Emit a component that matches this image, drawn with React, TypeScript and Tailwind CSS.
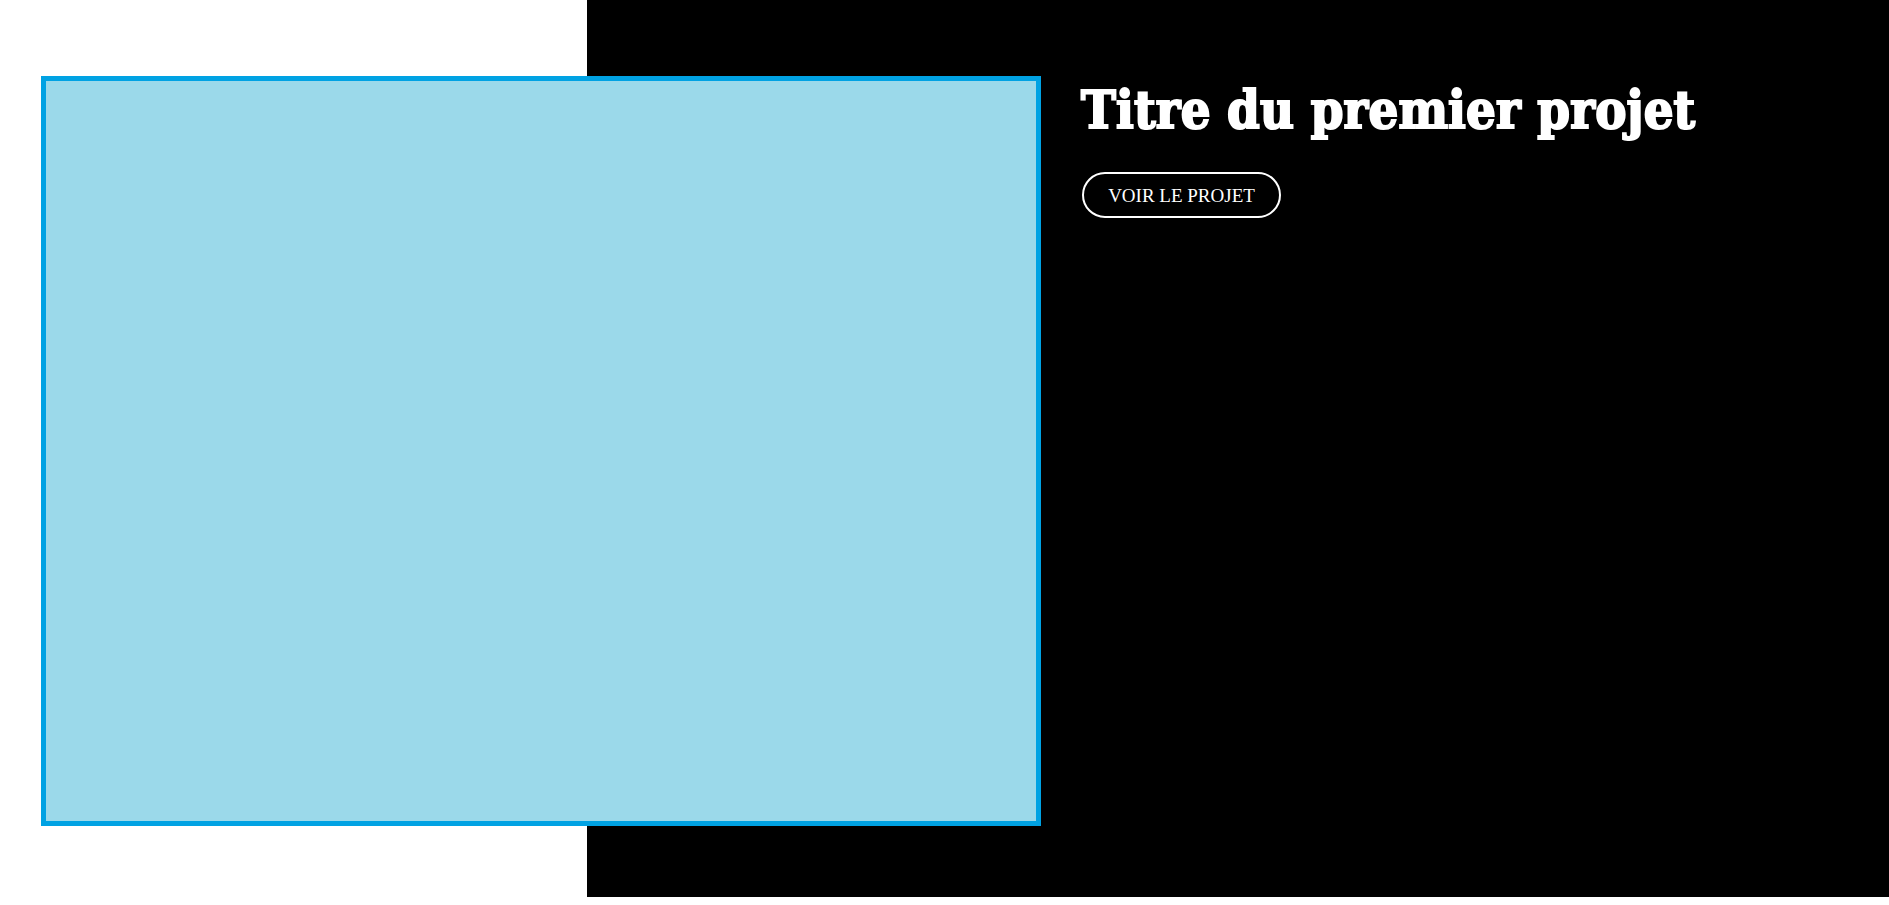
import React from "react";

const App: React.FC = () => {
  return (
    <div className="min-h-screen w-full bg-white">
      {/* Section: white strip on the left, black panel on the right */}
      <section className="h-[897px] bg-[linear-gradient(to_right,#ffffff_587px,#000000_587px)] pt-[76px] pl-[41px]">
        <div className="flex items-start">
          {/* Project image placeholder */}
          <div className="h-[750px] w-[1000px] shrink-0 border-[5px] border-[#00a2e3] bg-[#9bd9ea]" />

          {/* Project text */}
          <div className="ml-[40px] flex flex-col items-start">
            <h2 className="mt-[6px] font-['DejaVu_Serif',serif] text-[52px] font-black leading-[56px] tracking-[0.2px] text-white [font-stretch:condensed] [-webkit-text-stroke:2px_white]">
              Titre du premier projet
            </h2>
            <a
              href="#"
              className="ml-[1px] mt-[34px] flex h-[46px] w-[199px] items-center justify-center rounded-full border-2 border-white pt-[3px] font-['Liberation_Serif',serif] text-[19px] uppercase text-white first-letter:text-[22px]"
            >
              Voir le projet
            </a>
          </div>
        </div>
      </section>
    </div>
  );
};

export default App;
